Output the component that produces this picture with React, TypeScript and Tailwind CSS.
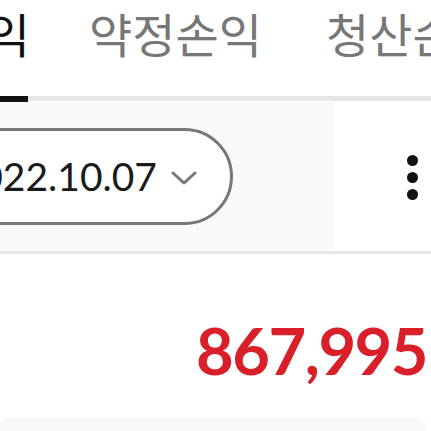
import React from "react";

export default function App() {
  const tabs = [
    { t: "실현손익", ml: "" },
    { t: "약정손익", ml: "ml-[59px]" },
    { t: "청산손익", ml: "ml-[64px]" },
  ];
  return (
    <div className="w-[431px] h-[431px] overflow-hidden bg-white relative">
      <div className="flex h-[96px] ml-[-143px] pt-[5px] whitespace-nowrap">
        {tabs.map((x, i) => (
          <div
            key={x.t}
            className={`shrink-0 text-[47px] leading-[56px] ${x.ml} ${i === 0 ? "text-[#111111]" : "text-[#777777]"}`}
            style={{ fontFamily: '"Noto Sans CJK KR", "Noto Sans", sans-serif' }}
          >
            {x.t}
          </div>
        ))}
      </div>
      <div className="flex h-[6px]">
        <div className="w-[28px] bg-[#111111]" />
        <div className="flex-1 bg-[#e6e6e6] mb-[1px]" />
      </div>
      <div className="flex h-[149px]">
        <div className="w-[333px] bg-[#f9f9f9] flex items-center">
          <div className="ml-[-60px] w-[293px] h-[97px] shrink-0 rounded-full border-[3px] border-[#777777] bg-white flex items-center justify-end pr-[33px] gap-[14px]">
            <span
              className="text-[39px] text-[#1a1a1a] leading-none whitespace-nowrap"
              style={{ fontFamily: "Lato, sans-serif" }}
            >
              2022.10.07
            </span>
            <svg width="26" height="16" viewBox="0 0 26 16" className="shrink-0 mt-[2px]">
              <path d="M2 3 L13 13 L24 3" fill="none" stroke="#777777" strokeWidth="3" strokeLinecap="round" strokeLinejoin="round" />
            </svg>
          </div>
        </div>
        <div className="flex-1 flex items-center justify-end pr-[13px]">
          <div className="flex flex-col gap-[6px] mt-[2px]">
            <div className="w-[11px] h-[11px] rounded-full bg-[#111111]" />
            <div className="w-[11px] h-[11px] rounded-full bg-[#111111]" />
            <div className="w-[11px] h-[11px] rounded-full bg-[#111111]" />
          </div>
        </div>
      </div>
      <div className="h-[3px] bg-[#e6e6e6]" />
      <div className="h-[164px] pt-[64px] pr-[4px] text-right">
        <span
          className="text-[65px] font-bold leading-none text-[#d91f2a] tracking-[-1.5px]"
          style={{ fontFamily: "Lato, sans-serif" }}
        >
          867,995
        </span>
      </div>
      <div className="h-[13px] bg-[#f8f8f8] rounded-t-lg mr-[5px]" />
    </div>
  );
}
